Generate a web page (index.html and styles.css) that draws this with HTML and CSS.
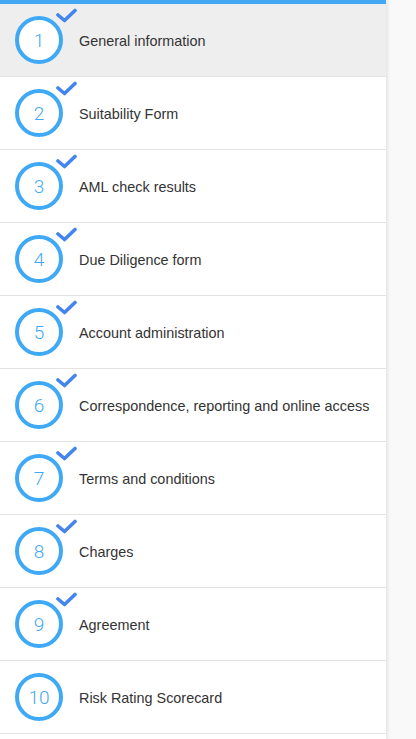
FILE: index.html
```html
<!DOCTYPE html>
<html lang="en">
<head>
    <meta charset="UTF-8">
    <meta name="viewport" content="width=device-width, initial-scale=1.0">
    <title>Steps</title>
    <link rel="stylesheet" href="styles.css">
</head>
<body>
    <div class="steps">
        <div class="step active">
            <div class="badge">1<svg class="check" viewBox="0 0 22 17"><polyline points="3,8 9.5,13.5 20,3.5"/></svg></div>
            <div class="label">General information</div>
        </div>
        <div class="step">
            <div class="badge">2<svg class="check" viewBox="0 0 22 17"><polyline points="3,8 9.5,13.5 20,3.5"/></svg></div>
            <div class="label">Suitability Form</div>
        </div>
        <div class="step">
            <div class="badge">3<svg class="check" viewBox="0 0 22 17"><polyline points="3,8 9.5,13.5 20,3.5"/></svg></div>
            <div class="label">AML check results</div>
        </div>
        <div class="step">
            <div class="badge">4<svg class="check" viewBox="0 0 22 17"><polyline points="3,8 9.5,13.5 20,3.5"/></svg></div>
            <div class="label">Due Diligence form</div>
        </div>
        <div class="step">
            <div class="badge">5<svg class="check" viewBox="0 0 22 17"><polyline points="3,8 9.5,13.5 20,3.5"/></svg></div>
            <div class="label">Account administration</div>
        </div>
        <div class="step">
            <div class="badge">6<svg class="check" viewBox="0 0 22 17"><polyline points="3,8 9.5,13.5 20,3.5"/></svg></div>
            <div class="label">Correspondence, reporting and online access</div>
        </div>
        <div class="step">
            <div class="badge">7<svg class="check" viewBox="0 0 22 17"><polyline points="3,8 9.5,13.5 20,3.5"/></svg></div>
            <div class="label">Terms and conditions</div>
        </div>
        <div class="step">
            <div class="badge">8<svg class="check" viewBox="0 0 22 17"><polyline points="3,8 9.5,13.5 20,3.5"/></svg></div>
            <div class="label">Charges</div>
        </div>
        <div class="step">
            <div class="badge">9<svg class="check" viewBox="0 0 22 17"><polyline points="3,8 9.5,13.5 20,3.5"/></svg></div>
            <div class="label">Agreement</div>
        </div>
        <div class="step">
            <div class="badge">10</div>
            <div class="label">Risk Rating Scorecard</div>
        </div>
    </div>
</body>
</html>
```

FILE: styles.css
```css
* {
    margin: 0;
    padding: 0;
    box-sizing: border-box;
}

body {
    background: #f9f9f9;
    font-family: 'Liberation Sans', Arial, sans-serif;
    color: #333;
}

.steps {
    width: 386px;
    min-height: 100vh;
    background: #fff;
    border-top: 4px solid #42a8f4;
    box-shadow: 1px 0 4px rgba(0, 0, 0, 0.12);
}

.step {
    display: flex;
    align-items: center;
    height: 73px;
    padding-left: 15px;
    border-bottom: 1px solid #e3e3e3;
}

.step.active {
    background: #eeeeee;
}

.badge {
    position: relative;
    flex: none;
    width: 48px;
    height: 48px;
    border: 4px solid #3fa9f5;
    border-radius: 50%;
    background: #fff;
    display: flex;
    align-items: center;
    justify-content: center;
    color: #3fa9f5;
    font-family: Roboto, 'Liberation Sans', sans-serif;
    font-weight: 300;
    font-size: 19px;
}

.check {
    position: absolute;
    left: 36px;
    top: -13px;
    width: 22px;
    height: 17px;
    fill: none;
    stroke: #4384ee;
    stroke-width: 3.6;
    stroke-linecap: round;
    stroke-linejoin: round;
}

.label {
    margin-left: 16px;
    padding-top: 2px;
    font-size: 14.4px;
    color: #333;
}
```
